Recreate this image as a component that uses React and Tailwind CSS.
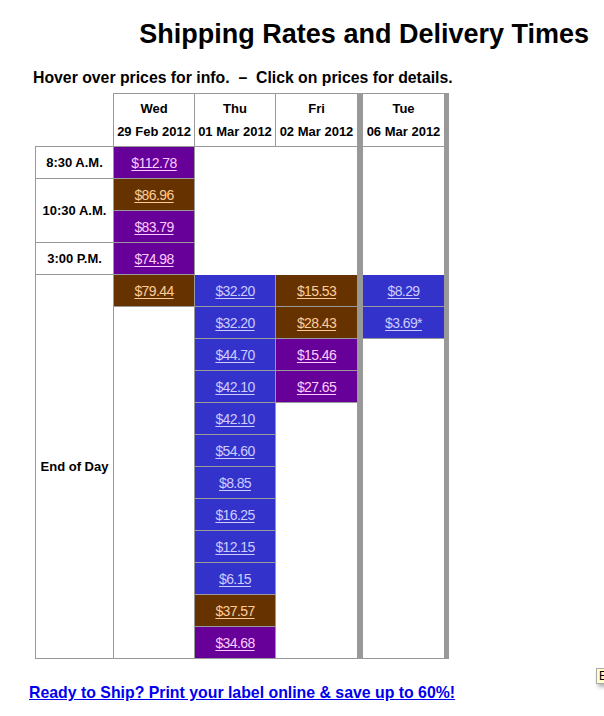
import React from "react";

const colors = {
  p: "bg-[#660099] text-[#ffccff]",
  b: "bg-[#663300] text-[#ffcc99]",
  u: "bg-[#3333cc] text-[#ccccff]",
};

const wed = [
  ["$112.78", "p"],
  ["$86.96", "b"],
  ["$83.79", "p"],
  ["$74.98", "p"],
  ["$79.44", "b"],
];

const thu = [
  ["$32.20", "u"],
  ["$32.20", "u"],
  ["$44.70", "u"],
  ["$42.10", "u"],
  ["$42.10", "u"],
  ["$54.60", "u"],
  ["$8.85", "u"],
  ["$16.25", "u"],
  ["$12.15", "u"],
  ["$6.15", "u"],
  ["$37.57", "b"],
  ["$34.68", "p"],
];

const fri = [
  ["$15.53", "b"],
  ["$28.43", "b"],
  ["$15.46", "p"],
  ["$27.65", "p"],
];

const tue = [
  ["$8.29", "u"],
  ["$3.69*", "u"],
];

function Price({ price, color }) {
  return (
    <div
      className={`h-[32px] border-b border-[#999] flex items-center justify-center ${colors[color]}`}
    >
      <a
        href="#"
        className="text-[14px] tracking-[-0.6px] underline underline-offset-[2px] leading-none"
      >
        {price}
      </a>
    </div>
  );
}

function DayHead({ day, date, left = true }) {
  return (
    <div
      className={`h-[54px] border-t border-b border-[#999] flex flex-col items-center justify-center text-[13px] font-bold leading-[23px] ${
        left ? "border-l" : ""
      }`}
    >
      <span>{day}</span>
      <span>{date}</span>
    </div>
  );
}

function Label({ text, h }) {
  return (
    <div
      className={`${h} border-b border-[#999] flex items-center justify-center text-[13px] font-bold`}
    >
      {text}
    </div>
  );
}

export default function App() {
  return (
    <div className="relative h-[716px] w-full overflow-hidden bg-white text-black font-['Liberation_Sans',Arial,sans-serif]">
      <h1 className="pt-[19px] pr-[15px] text-right text-[27px] font-bold leading-[31px]">
        Shipping Rates and Delivery Times
      </h1>
      <p className="mt-[18px] ml-[33px] text-[15.8px] font-bold leading-[20px]">
        {"Hover over prices for info.\u00a0 \u2013\u00a0 Click on prices for details."}
      </p>

      <div className="mt-[5px] ml-[35px] flex">
        {/* time labels */}
        <div className="w-[78px] flex flex-col">
          <div className="h-[53px]" />
          <div className="flex-1 flex flex-col border-l border-t border-[#999]">
            <Label text="8:30 A.M." h="h-[32px]" />
            <Label text="10:30 A.M." h="h-[64px]" />
            <Label text="3:00 P.M." h="h-[32px]" />
            <Label text="End of Day" h="flex-1" />
          </div>
        </div>

        {/* Wed */}
        <div className="w-[81px] flex flex-col border-l border-[#999]">
          <DayHead day="Wed" date="29 Feb 2012" left={false} />
          {wed.map(([p, c], i) => (
            <Price key={i} price={p} color={c} />
          ))}
          <div className="flex-1 border-b border-[#999]" />
        </div>

        {/* Thu */}
        <div className="w-[81px] flex flex-col border-l border-[#999]">
          <DayHead day="Thu" date="01 Mar 2012" left={false} />
          <div className="h-[128px]" />
          {thu.map(([p, c], i) => (
            <Price key={i} price={p} color={c} />
          ))}
        </div>

        {/* Fri */}
        <div className="w-[82px] flex flex-col">
          <DayHead day="Fri" date="02 Mar 2012" />
          <div className="h-[128px]" />
          <div className="flex-1 flex flex-col border-l border-b border-[#999]">
            {fri.map(([p, c], i) => (
              <Price key={i} price={p} color={c} />
            ))}
          </div>
        </div>

        <div className="w-[6px] bg-[#999]" />

        {/* Tue */}
        <div className="w-[81px] flex flex-col">
          <DayHead day="Tue" date="06 Mar 2012" left={false} />
          <div className="h-[128px]" />
          {tue.map(([p, c], i) => (
            <Price key={i} price={p} color={c} />
          ))}
          <div className="flex-1 border-b border-[#999]" />
        </div>

        <div className="w-[5px] bg-[#999]" />
      </div>

      <a
        href="#"
        className="block mt-[24px] ml-[29px] w-fit text-[15.85px] font-bold leading-[20px] text-[#0000ee] underline"
      >
        Ready to Ship? Print your label online &amp; save up to 60%!
      </a>

      <div className="absolute left-[596px] top-[668px] h-[16px] w-[40px] border border-[#aaa] bg-[#ffffcc] pl-[2px] text-[12px] leading-[14px] shadow-[2px_3px_4px_rgba(0,0,0,0.3)]">
        E
      </div>
    </div>
  );
}
